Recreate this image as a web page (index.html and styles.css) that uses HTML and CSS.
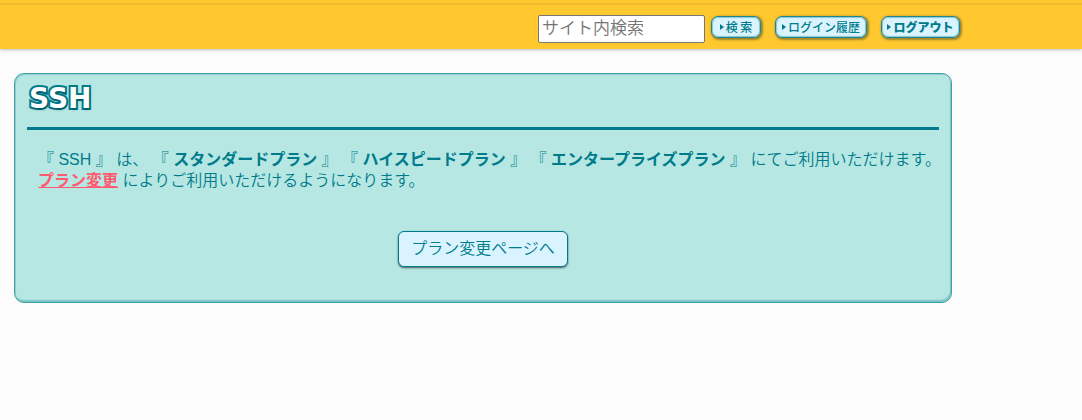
FILE: index.html
```html
<!DOCTYPE html>
<html lang="ja">
	<head>
		<meta charset="UTF-8"/>
		<meta name="viewport" content="width=device-width, initial-scale=1"/>
		<title>SSH</title>
		<link rel="stylesheet" href="styles.css">
	</head>
	<body>
		<header class="header">
			<form class="tools">
				<input class="search" type="text" name="q" placeholder="サイト内検索" aria-label="サイト内検索">
				<button class="tool tool-search" type="submit"><span class="arrow"></span>検 索</button>
				<a class="tool" href="#history"><span class="arrow"></span>ログイン履歴</a>
				<a class="tool tool-logout" href="#logout"><span class="arrow"></span>ログアウト</a>
			</form>
		</header>
		<main class="panel">
			<h1 class="title">SSH</h1>
			<p class="text">
				『 SSH 』 は、
				『 <b>スタンダードプラン</b> 』
				『 <b>ハイスピードプラン</b> 』
				『 <b>エンタープライズプラン</b> 』
				にてご利用いただけます。<br>
				<a class="change" href="#plan">プラン変更</a> によりご利用いただけるようになります。
			</p>
			<div class="action">
				<button class="plan" type="button">プラン変更ページへ</button>
			</div>
		</main>
	</body>
</html>
```

FILE: styles.css
```css
* {
	box-sizing: border-box;
}

body {
	margin: 0;
	background: #fcfcfc;
	color: #007b8b;
	font-family: "Liberation Sans", "Noto Sans CJK JP", sans-serif;
	font-size: 16px;
	font-weight: 350;
}

/* yellow bar with a thin darker line near the top */
.header {
	padding: 15px 0 6px;
	background: linear-gradient(#ffc82f 3px, #f1bd2c 3px, #f1bd2c 5px, #ffc82f 5px);
	box-shadow: 0 1px 3px rgba(0, 0, 0, 0.25);
}

.tools {
	display: flex;
	justify-content: flex-end;
	align-items: flex-start;
	gap: 14px;
	max-width: 960px;
}

.search {
	width: 167px;
	height: 28px;
	margin-right: -8px;
	padding: 0 3px 1px;
	border: 1px solid #767676;
	border-radius: 2px;
	background: #fff;
	font: inherit;
	font-size: 17px;
}

.search::placeholder {
	color: #757575;
}

.tool {
	display: flex;
	align-items: center;
	justify-content: center;
	gap: 2px;
	width: 92px;
	height: 22px;
	margin-top: 1px;
	padding: 0;
	border: 1px solid #1c8790;
	border-radius: 7px;
	background: #daf4ff;
	box-shadow: inset 0 0 1px 1px #8ac6cf, 1px 1px 2px 1px rgba(60, 70, 40, 0.5);
	color: #007b8b;
	font-family: "Noto Sans CJK JP", sans-serif;
	font-size: 12px;
	font-weight: 500;
	line-height: 20px;
	text-decoration: none;
	white-space: nowrap;
}

.tool-search {
	width: 50px;
}

.tool-logout {
	width: 79px;
	font-weight: 900;
}

.arrow {
	border: 3px solid transparent;
	border-left: 4px solid #007b8b;
	border-right: 0;
}

.panel {
	max-width: 938px;
	margin: 24px 14px;
	padding: 9px 12px 35px;
	border: 1px solid #3fa0a3;
	border-radius: 10px;
	background: #b6e7e3;
	box-shadow: inset -1px -2px 1px #7cc4c5, inset 1px 1px 0 #8fcfd0;
}

.title {
	margin: 0;
	padding: 0 2px 12px;
	border-bottom: 3px solid #007b8b;
	color: #fff;
	font-family: "DejaVu Sans", sans-serif;
	font-size: 28px;
	font-weight: bold;
	line-height: 32px;
	-webkit-text-stroke: 4px #007b8b;
	paint-order: stroke fill;
	stroke-linejoin: round;
	text-shadow: 1px 2px 2px rgba(0, 0, 0, 0.25);
}

.text {
	margin: 19px -10px 0 0;
	padding: 0 0 0 11px;
	line-height: 21px;
}

.change {
	color: #ff5a70;
	font-weight: bold;
}

.action {
	margin-top: 40px;
	text-align: center;
}

.plan {
	height: 36px;
	padding: 0 12px 4px;
	border: 1px solid #007b8b;
	border-radius: 6px;
	background: #daf4ff;
	box-shadow: 0 1px 2px rgba(0, 0, 0, 0.6);
	color: #007b8b;
	font: inherit;
}
```
